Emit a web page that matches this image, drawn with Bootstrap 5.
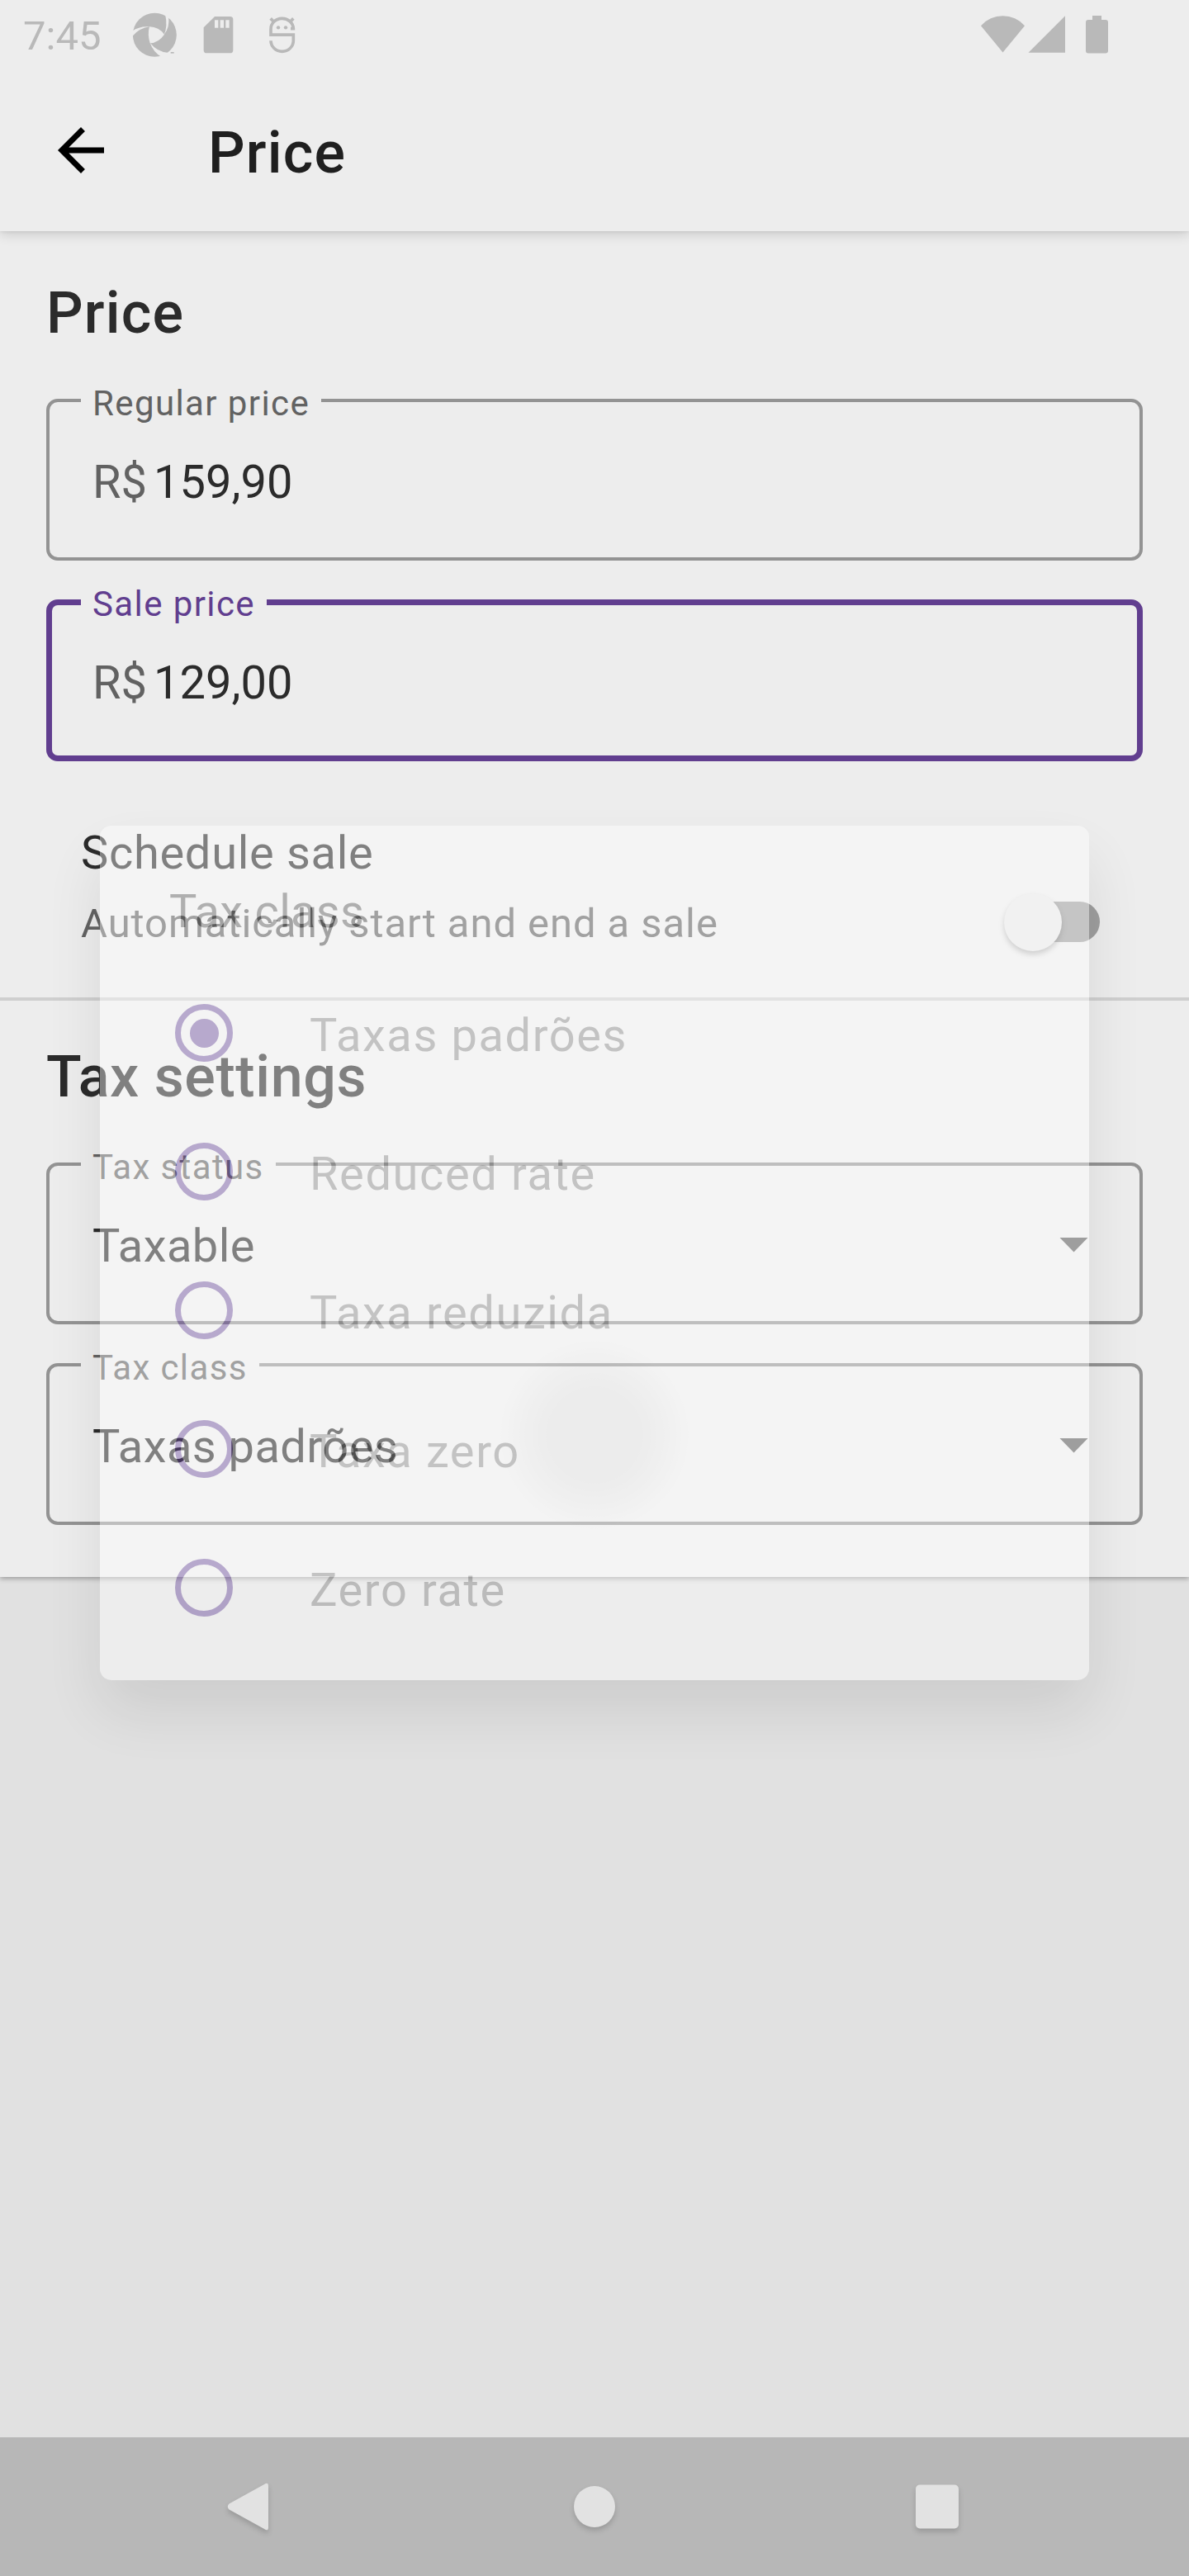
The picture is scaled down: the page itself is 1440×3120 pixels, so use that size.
<!DOCTYPE html>
<html lang="en">
<head>
<meta charset="utf-8">
<meta name="viewport" content="width=device-width, initial-scale=1">
<title>Price</title>
<link href="https://cdn.jsdelivr.net/npm/bootstrap@5.3.0/dist/css/bootstrap.min.css" rel="stylesheet">
<style>
body{font-family:Roboto,"Noto Sans",sans-serif;background:#e1e1e1;color:#2b2b2b;}
svg{display:block;flex:none}
.phone{width:1440px;height:3120px;overflow:hidden}
.surface{background:#ededed}
.status{height:84px;padding:15px 94px 0 28px;color:#b9b9b9;fill:#b9b9b9;z-index:3}
.clock{font-size:49px;line-height:58px;width:132px}
.gap-sd{margin-left:30px}
.gap-bot{margin-left:36px}
.gap-signal{margin-left:2px}
.gap-battery{margin-left:20px}
.topbar{height:196px;padding:56px 56px 0;z-index:2;box-shadow:0 4px 14px rgba(0,0,0,.14),0 1px 4px rgba(0,0,0,.07)}
.topbar-title{font-size:70px;line-height:82px;font-weight:500;letter-spacing:1.2px;color:#1f1f1f;margin:4px 0 0 112px}
.sheet{padding:58px 56px 63px;box-shadow:0 2px 6px rgba(0,0,0,.32)}
.section-title{font-size:70px;line-height:82px;font-weight:500;letter-spacing:1.2px;margin:0 0 63px}
.section-title.tax{letter-spacing:.58px}
.field{--bw:4px;height:196px;border:var(--bw) solid #939393;border-radius:14px}
.field + .field{margin-top:47px}
.field-label{font-size:42px;line-height:50px;letter-spacing:1.4px;color:#626262;padding:0 14px;margin:calc(-19px - var(--bw)) 0 0 calc(42px - var(--bw))}
.field-row{font-size:56px;line-height:66px;margin-top:37px;padding:0 calc(66px - var(--bw)) 0 calc(56px - var(--bw))}
.field.active{--bw:7px;border-color:#613e8f}
.field.active .field-label{color:#613e8f}
.prefix{color:#626262;width:74px}
.choice{letter-spacing:.45px}
.caret{width:35px;height:18px;background:#5e5e5e;clip-path:polygon(0 0,100% 0,50% 100%);margin-top:-3px}
.schedule{margin-top:78px;padding:0 52px 0 42px}
.schedule-title{font-size:56px;line-height:66px;letter-spacing:.69px}
.schedule-note{font-size:49px;line-height:58px;letter-spacing:.93px;color:#626262;margin-top:24px}
.toggle{width:98px;height:49px;border-radius:25px;background:#9e9e9e;margin-bottom:7px}
.knob{width:70px;height:70px;border-radius:50%;background:#e8e8e8;margin-left:-18px;box-shadow:0 4px 6px rgba(0,0,0,.25)}
.rule{height:4px;background:#cfcfcf;margin:60px -56px 51px}
.chooser{position:absolute;left:121px;top:1000px;width:1198px;height:1035px;border-radius:14px;background:#fff;opacity:.4;padding:71px 84px 0;box-shadow:0 38px 72px rgba(0,0,0,.23);z-index:3}
.chooser-title{font-size:56px;line-height:66px;letter-spacing:.28px;color:#535353;margin-bottom:30px}
.option{height:168px;padding-left:7px}
.option-text{font-size:56px;line-height:66px;letter-spacing:1.6px;color:#858585;margin-left:93px;padding-top:6px}
.ring{width:70px;height:70px;border:7px solid #67449e;border-radius:50%}
.ring.on::after{content:"";width:35px;height:35px;border-radius:50%;background:#67449e}
.ripple{position:absolute;left:599px;top:738px;width:230px;height:230px;margin:-115px;border-radius:50%;background:radial-gradient(circle closest-side,rgba(0,0,0,.075) 50%,rgba(0,0,0,.035) 78%,rgba(0,0,0,0) 100%)}
.navkeys{height:168px;background:#b7b7b7;padding-left:270px;fill:#e2e2e2}
.navkeys svg{filter:drop-shadow(0 4px 3px rgba(0,0,0,.16))}
.key-home{margin-left:360px}
.key-recent{margin-left:355px}
</style>
</head>
<body>
<div class="phone position-relative d-flex flex-column">
  <header class="surface status position-relative d-flex align-items-start">
    <div class="clock">7:45</div>
    <svg width="54" height="54" viewBox="480 45 162 162"><circle cx="562" cy="127" r="79.500"/><g fill="#ededed"><path d="M543 97Q577 98 597 125Q577 155 545 157Q535 125 543 97Z"/><path d="M476 116Q505 93 545 97Q505 101 478 135Z"/><path d="M600 50Q610 95 596 126Q618 98 612 60Z"/><path d="M545 155Q557 190 590 209L612 192Q570 188 545 155Z"/></g><path d="M620 189h12v5h-12z"/></svg>
    <svg class="gap-sd" width="42" height="54" viewBox="732 45 126 162"><path fill-rule="evenodd" d="M740 100L780 60H836Q847 60 847 71V182Q847 193 836 193H751Q740 193 740 182ZM780 73V101H793V73ZM800 73V101H813V73ZM820 73V101H833V73Z"/></svg>
    <svg class="gap-bot" width="40" height="54" viewBox="966 45 120 162"><g fill="none" stroke="#b9b9b9" stroke-width="11"><path d="M1056 104H1066A41 38 0 0 0 984 106V126.500H1066V148A41 39 0 0 1 984 148"/><path d="M983 67L995 79M1066 67L1054 79"/></g><circle cx="1011" cy="100" r="6.500"/><circle cx="1038" cy="100" r="6.500"/></svg>
    <svg class="ms-auto" width="56" height="54" viewBox="1186 15 56 54"><path d="M1188 31.200A35.300 35.300 0 0 1 1241 31.200L1214.500 63.500Z"/></svg>
    <svg class="gap-signal" width="48" height="54" viewBox="1244 15 48 54"><path d="M1245.500 63.800L1290 19.300V63.800Z"/></svg>
    <svg class="gap-battery" width="34" height="54" viewBox="1312 15 34 54"><path d="M1323 19H1334V24H1339Q1342 24 1342 27V61.500Q1342 64.500 1339 64.500H1318Q1315 64.500 1315 61.500V27Q1315 24 1318 24H1323Z"/></svg>
  </header>
  <nav class="surface topbar position-relative d-flex align-items-start">
    <svg width="84" height="84" viewBox="0 0 24 24"><path d="M20 11H7.830l5.590-5.590L12 4l-8 8 8 8 1.410-1.410L7.830 13H20z"/></svg>
    <h1 class="topbar-title">Price</h1>
  </nav>
  <main class="surface sheet">
    <h2 class="section-title">Price</h2>
    <div class="field d-flex flex-column">
      <div class="field-label surface align-self-start">Regular price</div>
      <div class="field-row d-flex"><span class="prefix">R$</span><span>159,90</span></div>
    </div>
    <div class="field active d-flex flex-column">
      <div class="field-label surface align-self-start">Sale price</div>
      <div class="field-row d-flex"><span class="prefix">R$</span><span>129,00</span></div>
    </div>
    <div class="schedule d-flex justify-content-between">
      <div><div class="schedule-title">Schedule sale</div><div class="schedule-note">Automatically start and end a sale</div></div>
      <div class="toggle align-self-end d-flex align-items-center"><div class="knob"></div></div>
    </div>
    <div class="rule"></div>
    <h2 class="section-title tax">Tax settings</h2>
    <div class="field d-flex flex-column">
      <div class="field-label surface align-self-start">Tax status</div>
      <div class="field-row choice d-flex align-items-center justify-content-between"><span>Taxable</span><span class="caret"></span></div>
    </div>
    <div class="field d-flex flex-column">
      <div class="field-label surface align-self-start">Tax class</div>
      <div class="field-row choice d-flex align-items-center justify-content-between"><span>Taxas padrões</span><span class="caret"></span></div>
    </div>
  </main>
  <section class="chooser" role="dialog">
    <div class="ripple"></div>
    <div class="chooser-title">Tax class</div>
    <div class="option d-flex align-items-center"><span class="ring on d-flex align-items-center justify-content-center"></span><span class="option-text">Taxas padrões</span></div>
    <div class="option d-flex align-items-center"><span class="ring"></span><span class="option-text">Reduced rate</span></div>
    <div class="option d-flex align-items-center"><span class="ring"></span><span class="option-text">Taxa reduzida</span></div>
    <div class="option d-flex align-items-center"><span class="ring"></span><span class="option-text">Taxa zero</span></div>
    <div class="option d-flex align-items-center"><span class="ring"></span><span class="option-text">Zero rate</span></div>
  </section>
  <footer class="navkeys mt-auto d-flex align-items-center">
    <svg width="60" height="64" viewBox="270 3004 60 64"><path d="M320 3009Q325 3005.500 325 3011V3061Q325 3066.500 320 3063L277.500 3039.500Q274 3036 277.500 3032.500Z"/></svg>
    <svg class="key-home" width="60" height="64" viewBox="690 3004 60 64"><circle cx="720" cy="3036" r="25"/></svg>
    <svg class="key-recent" width="60" height="64" viewBox="1105 3004 60 64"><rect x="1109" y="3009.500" width="52" height="53" rx="5"/></svg>
  </footer>
</div>
<script src="https://cdn.jsdelivr.net/npm/bootstrap@5.3.0/dist/js/bootstrap.bundle.min.js"></script>
</body>
</html>
